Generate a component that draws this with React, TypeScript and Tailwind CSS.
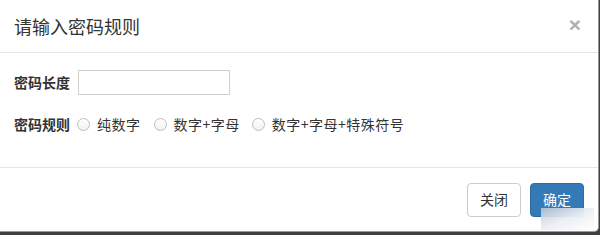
import React from "react";

function Radio() {
  return (
    <span className="inline-block w-[13px] h-[13px] rounded-full border border-[#bdbdbd] bg-gradient-to-b from-[#ffffff] to-[#f2f2f2] shrink-0" />
  );
}

export default function App() {
  return (
    <div className="w-[600px] h-[235px] bg-[#3f3f3f] overflow-hidden" style={{ fontFamily: '"Noto Sans CJK SC", "Liberation Sans", sans-serif' }}>
      <div className="relative w-[599px] h-[232px] bg-white rounded-br-[5px] border-r border-b border-[#9a9a9a] flex flex-col text-[#333]">
        <div className="h-[53px] border-b border-[#e5e5e5] flex items-center justify-between pl-[14px] pr-[17px] shrink-0">
          <div className="text-[18px] leading-none">请输入密码规则</div>
          <div className="text-[21px] font-bold leading-none text-[#b0b0b0] mt-[-3px]" style={{ fontFamily: '"Liberation Sans", sans-serif' }}>×</div>
        </div>
        <div className="flex-1 flex flex-col pl-[14px] pt-[17px] text-[14px]">
          <div className="flex items-center gap-[8px] h-[25px]">
            <span className="font-bold">密码长度</span>
            <div className="w-[152px] h-[25px] border border-[#cfcfcf] bg-white" />
          </div>
          <div className="flex items-center h-[26px] mt-[16px]">
            <span className="font-bold mr-[7px]">密码规则</span>
            <Radio />
            <span className="ml-[7px] mr-[13px] tracking-[0.5px]">纯数字</span>
            <Radio />
            <span className="ml-[7px] mr-[12px] tracking-[0.5px]">数字+字母</span>
            <Radio />
            <span className="ml-[7px] tracking-[0.5px]">数字+字母+特殊符号</span>
          </div>
        </div>
        <div className="h-[64px] border-t border-[#e5e5e5] flex items-center justify-end gap-[9px] pr-[14px] shrink-0">
          <button className="w-[54px] h-[34px] rounded-[4px] border border-[#ccc] bg-white text-[14px] text-[#333]">关闭</button>
          <button className="w-[54px] h-[34px] rounded-[4px] border border-[#2e6da4] bg-[#337ab7] text-[14px] text-white">确定</button>
        </div>
        <div className="absolute left-[541px] top-[208px] w-[53px] h-[22px] bg-gradient-to-br from-[rgba(190,200,215,0.85)] via-[rgba(235,238,243,0.95)] to-[#ffffff]" />
      </div>
    </div>
  );
}
